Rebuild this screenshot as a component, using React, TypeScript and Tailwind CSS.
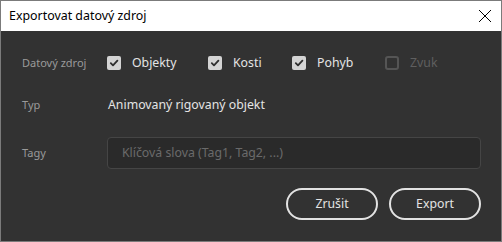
import React from "react";

const Check = ({ disabled }: { disabled?: boolean }) =>
  disabled ? (
    <div className="w-[14px] h-[14px] rounded-[3px] border-2 border-[#555555] shrink-0" />
  ) : (
    <div className="w-[14px] h-[14px] rounded-[2px] bg-[#d4d4d4] shrink-0 flex items-center justify-center">
      <svg width="10" height="10" viewBox="0 0 10 10">
        <path d="M1.8 5.2 L4 7.4 L8.4 2.6" fill="none" stroke="#2e2e2e" strokeWidth="1.8" strokeLinecap="round" strokeLinejoin="round" />
      </svg>
    </div>
  );

export default function App() {
  return (
    <div className="w-[502px] h-[242px] border border-[#7b7b7b] flex flex-col overflow-hidden" style={{ fontFamily: '"Noto Sans", sans-serif' }}>
      <div className="h-[30px] bg-white flex items-center justify-between pl-[8px] pr-[8px] shrink-0">
        <span className="text-[12.4px] text-black">Exportovat datový zdroj</span>
        <svg width="14" height="14" viewBox="0 0 14 14" className="mr-[1px]">
          <path d="M1 1 L13 13 M13 1 L1 13" stroke="#000" strokeWidth="1" />
        </svg>
      </div>
      <div className="flex-1 bg-[#323232] pl-[21px] pr-[20px] pt-[20px]">
        <div className="flex items-center h-[24px]">
          <span className="w-[85px] text-[11px] text-[#9a9a9a]">Datový zdroj</span>
          <div className="flex items-center gap-[11px] w-[101px]">
            <Check />
            <span className="text-[12.3px] text-[#e4e4e4]">Objekty</span>
          </div>
          <div className="flex items-center gap-[11px] w-[84px]">
            <Check />
            <span className="text-[12.3px] text-[#e4e4e4]">Kosti</span>
          </div>
          <div className="flex items-center gap-[11px] w-[93px]">
            <Check />
            <span className="text-[12.3px] text-[#e4e4e4]">Pohyb</span>
          </div>
          <div className="flex items-center gap-[11px]">
            <Check disabled />
            <span className="text-[12.3px] text-[#5f5f5f]">Zvuk</span>
          </div>
        </div>
        <div className="flex items-center h-[24px] mt-[18px]">
          <span className="w-[86px] text-[11px] text-[#9a9a9a]">Typ</span>
          <span className="text-[12.3px] text-[#e4e4e4]">Animovaný rigovaný objekt</span>
        </div>
        <div className="flex items-center mt-[20px]">
          <span className="w-[85px] text-[11px] text-[#9a9a9a]">Tagy</span>
          <div className="w-[374px] h-[32px] rounded-[4px] border border-[#454545] bg-[#2a2a2a] flex items-center pl-[14px]">
            <span className="text-[12.3px] text-[#6a6a6a]">Klíčová slova (Tag1, Tag2, ...)</span>
          </div>
        </div>
        <div className="flex justify-end gap-[11px] mt-[19px]">
          <button className="w-[92px] h-[32px] rounded-full border-2 border-[#e2e2e2] text-[12.3px] text-[#e4e4e4]">Zrušit</button>
          <button className="w-[92px] h-[32px] rounded-full border-2 border-[#e2e2e2] text-[12.3px] text-[#e4e4e4]">Export</button>
        </div>
      </div>
    </div>
  );
}
